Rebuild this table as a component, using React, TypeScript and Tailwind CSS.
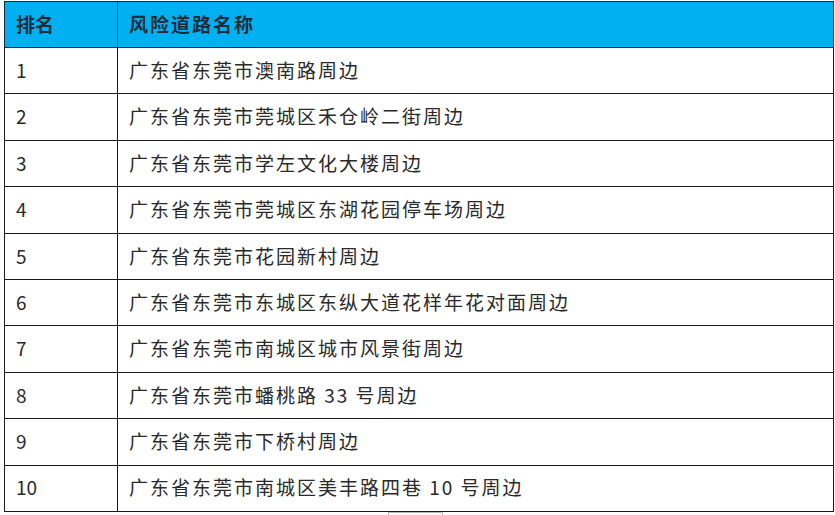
const rows = [
  "广东省东莞市澳南路周边",
  "广东省东莞市莞城区禾仓岭二街周边",
  "广东省东莞市学左文化大楼周边",
  "广东省东莞市莞城区东湖花园停车场周边",
  "广东省东莞市花园新村周边",
  "广东省东莞市东城区东纵大道花样年花对面周边",
  "广东省东莞市南城区城市风景街周边",
  "广东省东莞市蟠桃路 33 号周边",
  "广东省东莞市下桥村周边",
  "广东省东莞市南城区美丰路四巷 10 号周边",
];

export default function App() {
  return (
    <div
      className="w-[835px] h-[515px] bg-white pt-[1px] pl-[4px] overflow-hidden"
      style={{ fontFamily: '"Noto Sans CJK SC", "Noto Sans", sans-serif' }}
    >
      <table className="border-collapse w-[830px] table-fixed text-[19px] text-[#2a2a2a]">
        <colgroup>
          <col className="w-[113px]" />
          <col />
        </colgroup>
        <thead>
          <tr className="h-[46px] bg-[#00b0f0]">
            <th className="border border-[#1a2a3a] text-left pl-[11px] font-bold text-[#1c2b38]">排名</th>
            <th className="border border-[#1a2a3a] text-left pl-[11px] font-bold text-[#1c2b38] tracking-[2px]">风险道路名称</th>
          </tr>
        </thead>
        <tbody>
          {rows.map((name, i) => (
            <tr key={i} className="h-[46.4px]">
              <td className="border border-[#1a1a1a] pl-[11px] pb-[1px]">{i + 1}</td>
              <td className="border border-[#1a1a1a] pl-[11px] pb-[1px] tracking-[2px]">{name}</td>
            </tr>
          ))}
        </tbody>
      </table>
      <div className="ml-[384px] w-[55px] h-[4px] border-l border-r border-t border-[#bbb]" />
    </div>
  );
}
